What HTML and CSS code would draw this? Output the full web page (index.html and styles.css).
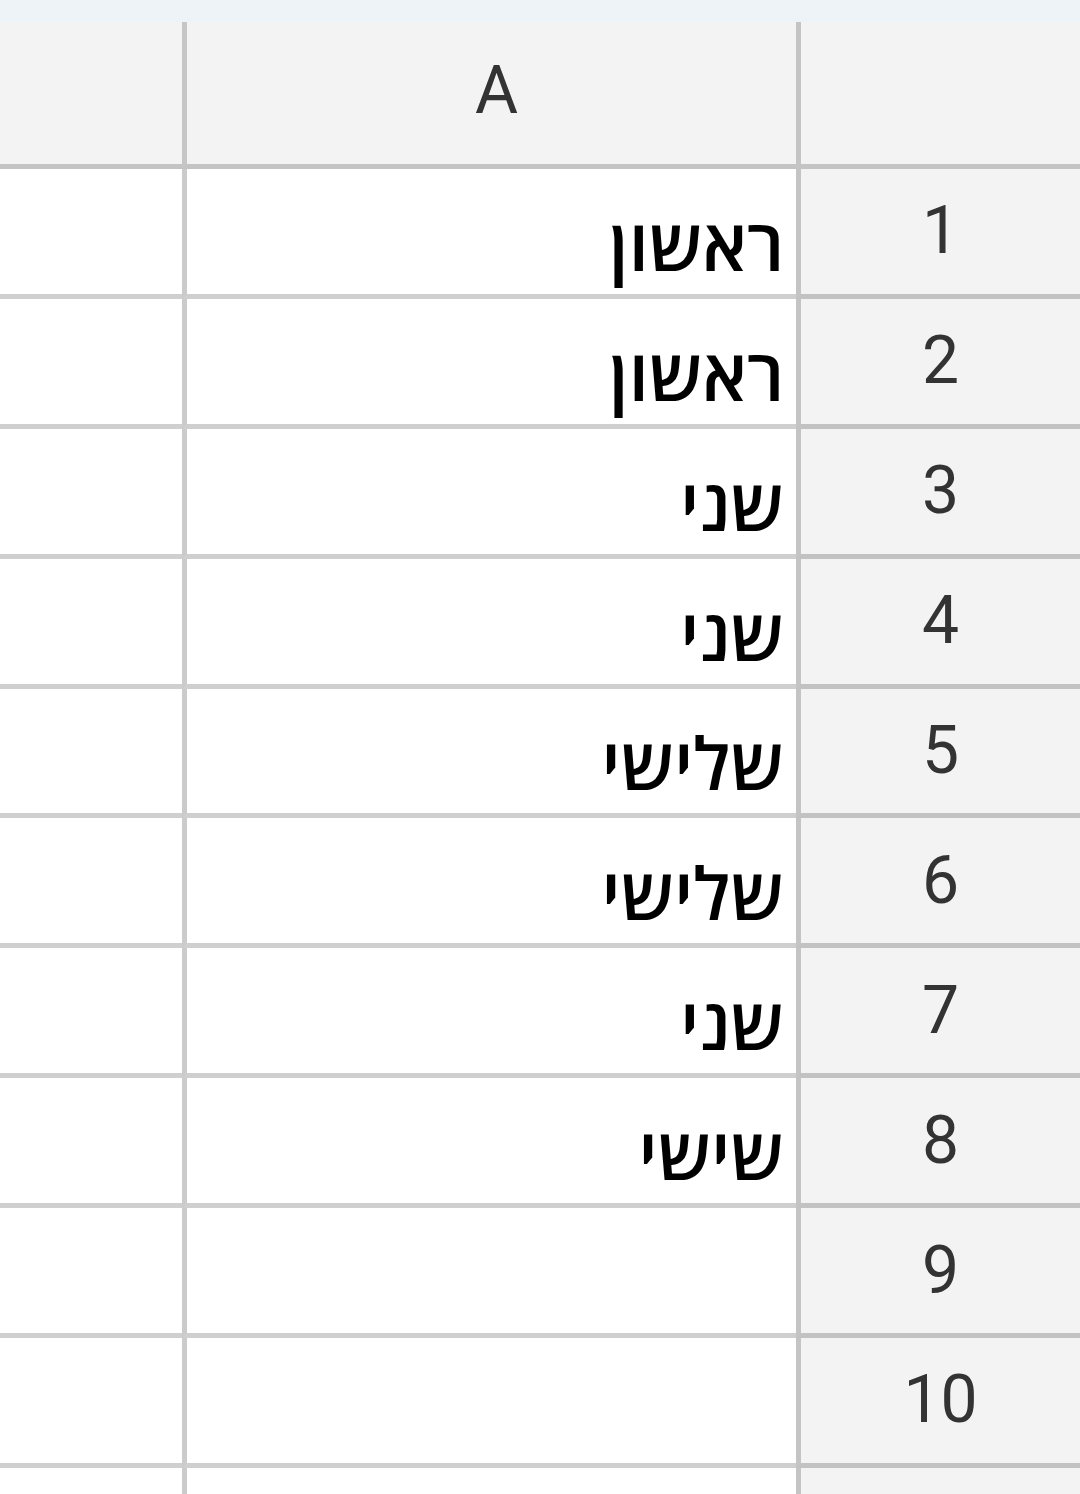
FILE: index.html
```html
<!DOCTYPE html>
<html lang="he" dir="rtl">
<head>
<meta charset="utf-8">
<title>גיליון</title>
<link rel="stylesheet" href="styles.css">
</head>
<body>
<div class="topbar"></div>
<div class="sheet">
  <div class="corner"></div>
  <div class="colhead">A</div>
  <div class="colhead rest"></div>

  <div class="rowhead">1</div><div class="cell">ראשון</div><div class="cell rest"></div>
  <div class="rowhead">2</div><div class="cell">ראשון</div><div class="cell rest"></div>
  <div class="rowhead">3</div><div class="cell">שני</div><div class="cell rest"></div>
  <div class="rowhead">4</div><div class="cell">שני</div><div class="cell rest"></div>
  <div class="rowhead">5</div><div class="cell">שלישי</div><div class="cell rest"></div>
  <div class="rowhead">6</div><div class="cell">שלישי</div><div class="cell rest"></div>
  <div class="rowhead">7</div><div class="cell">שני</div><div class="cell rest"></div>
  <div class="rowhead">8</div><div class="cell">שישי</div><div class="cell rest"></div>
  <div class="rowhead">9</div><div class="cell"></div><div class="cell rest"></div>
  <div class="rowhead">10</div><div class="cell"></div><div class="cell rest"></div>
  <div class="rowhead"></div><div class="cell"></div><div class="cell rest"></div>
</div>
</body>
</html>
```
FILE: styles.css
```css
html, body {
  margin: 0;
  padding: 0;
  height: 100%;
  overflow: hidden;
  background: #ffffff;
}

body {
  font-family: Roboto, "Open Sans", "Noto Sans", sans-serif;
}

.topbar {
  height: 22px;
  background: #eef3f7;
}

.sheet {
  display: grid;
  direction: rtl;
  grid-template-columns: 284px 614px 1fr;
  grid-template-rows: 147px repeat(11, 129.9px);
}

.corner,
.colhead {
  background: #f3f3f3;
  border-bottom: 5px solid #c4c4c4;
  box-sizing: border-box;
}

.corner {
  border-left: 5px solid #c4c4c4;
}

.colhead {
  display: flex;
  align-items: center;
  justify-content: center;
  padding: 0 0 5px 10px;
  font-family: Roboto, "Noto Sans", sans-serif;
  font-size: 66px;
  line-height: 1;
  color: #333333;
}

.colhead:not(.rest) {
  border-left: 5px solid #c6c6c6;
}

.colhead.rest {
  border-left: 0;
}

.rowhead {
  box-sizing: border-box;
  background: #f3f3f3;
  border-left: 5px solid #c4c4c4;
  border-bottom: 5px solid #c2c2c2;
  display: flex;
  align-items: center;
  justify-content: center;
  font-family: Roboto, "Noto Sans", sans-serif;
  font-size: 66px;
  line-height: 1;
  color: #333333;
}

.cell {
  box-sizing: border-box;
  background: #ffffff;
  border-left: 5px solid #cbcbcb;
  border-bottom: 5px solid #cfcfcf;
  display: flex;
  align-items: flex-end;
  justify-content: flex-start;
  padding: 0 12px 15px 12px;
  font-family: "Open Sans", "Noto Sans", "DejaVu Sans", sans-serif;
  font-size: 72px;
  font-weight: 600;
  line-height: 1;
  color: #000000;
}

.cell.rest {
  border-left: 0;
}
```
